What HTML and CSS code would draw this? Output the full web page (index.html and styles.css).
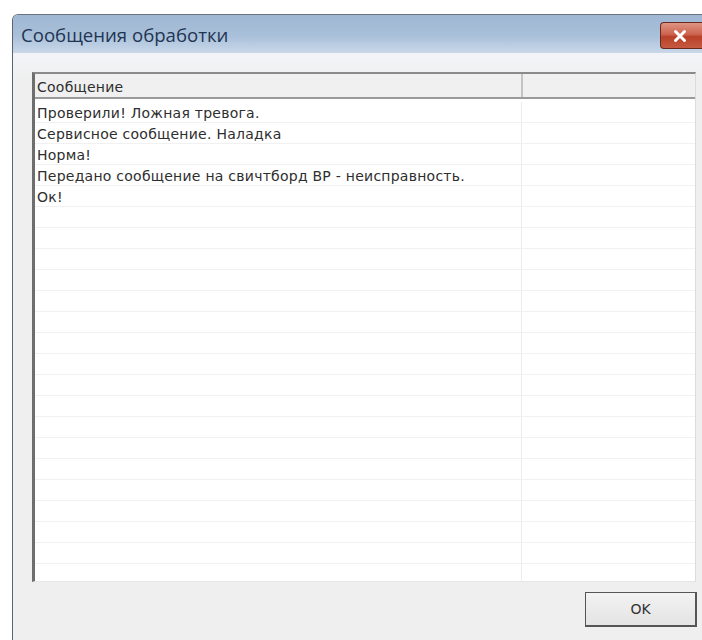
FILE: index.html
```html
<!DOCTYPE html>
<html lang="ru">
<head>
<meta charset="utf-8">
<title>Сообщения обработки</title>
<link rel="stylesheet" href="styles.css">
</head>
<body>
<div class="window">
  <div class="titlebar">
    <span class="title">Сообщения обработки</span>
    <button class="close" aria-label="Закрыть">
      <svg width="16" height="14" viewBox="0 0 16 14">
        <path d="M3.5 2.5 L12.5 11.5 M12.5 2.5 L3.5 11.5" stroke="#fff" stroke-width="3" stroke-linecap="round"/>
      </svg>
    </button>
  </div>
  <div class="client">
    <div class="list">
      <div class="header">
        <div class="hcell main">Сообщение</div>
        <div class="hcell extra"></div>
      </div>
      <div class="rows">
        <div class="row"><div class="cell main">Проверили! Ложная тревога.</div><div class="cell extra"></div></div>
        <div class="row"><div class="cell main">Сервисное сообщение. Наладка</div><div class="cell extra"></div></div>
        <div class="row"><div class="cell main">Норма!</div><div class="cell extra"></div></div>
        <div class="row"><div class="cell main">Передано сообщение на свичтборд ВР - неисправность.</div><div class="cell extra"></div></div>
        <div class="row"><div class="cell main">Ок!</div><div class="cell extra"></div></div>
        <div class="row"><div class="cell main"></div><div class="cell extra"></div></div>
        <div class="row"><div class="cell main"></div><div class="cell extra"></div></div>
        <div class="row"><div class="cell main"></div><div class="cell extra"></div></div>
        <div class="row"><div class="cell main"></div><div class="cell extra"></div></div>
        <div class="row"><div class="cell main"></div><div class="cell extra"></div></div>
        <div class="row"><div class="cell main"></div><div class="cell extra"></div></div>
        <div class="row"><div class="cell main"></div><div class="cell extra"></div></div>
        <div class="row"><div class="cell main"></div><div class="cell extra"></div></div>
        <div class="row"><div class="cell main"></div><div class="cell extra"></div></div>
        <div class="row"><div class="cell main"></div><div class="cell extra"></div></div>
        <div class="row"><div class="cell main"></div><div class="cell extra"></div></div>
        <div class="row"><div class="cell main"></div><div class="cell extra"></div></div>
        <div class="row"><div class="cell main"></div><div class="cell extra"></div></div>
        <div class="row"><div class="cell main"></div><div class="cell extra"></div></div>
        <div class="row"><div class="cell main"></div><div class="cell extra"></div></div>
        <div class="row"><div class="cell main"></div><div class="cell extra"></div></div>
        <div class="row"><div class="cell main"></div><div class="cell extra"></div></div>
        <div class="row"><div class="cell main"></div><div class="cell extra"></div></div>
      </div>
    </div>
    <div class="buttons">
      <button class="ok">OK</button>
    </div>
  </div>
</div>
</body>
</html>
```
FILE: styles.css
```css
html, body {
  margin: 0;
  padding: 0;
  background: #ffffff;
  overflow: hidden;
}

body {
  width: 702px;
  height: 640px;
  font-family: "DejaVu Sans", Verdana, sans-serif;
  font-size: 14px;
  letter-spacing: 0.25px;
  color: #2e2e2e;
}

.window {
  margin: 14px 0 0 12px;
  height: 626px;
  border-left: 1px solid #5b6470;
  border-top: 1px solid #6b7480;
  border-top-left-radius: 6px;
  background: #eef2f6;
  display: flex;
  flex-direction: column;
  overflow: hidden;
}

.titlebar {
  height: 38px;
  flex: none;
  display: flex;
  align-items: flex-start;
  justify-content: space-between;
  background: linear-gradient(to bottom, #9fb7d3 0%, #a9c0da 55%, #c9d8e9 100%);
}

.title {
  font-family: "Open Sans", "Noto Sans", sans-serif;
  font-size: 18.6px;
  letter-spacing: 0;
  color: #1f3553;
  padding: 7px 0 0 8px;
}

.close {
  margin-top: 7px;
  width: 42px;
  height: 27px;
  padding: 0 4px 0 0;
  border: 1px solid #6a2a20;
  border-right: none;
  border-radius: 4px 0 0 4px;
  background: linear-gradient(to bottom, #df9483 0%, #cd6450 45%, #b94029 55%, #c55a40 100%);
  display: flex;
  align-items: center;
  justify-content: center;
}

.client {
  flex: 1;
  display: flex;
  flex-direction: column;
  padding: 19px 6px 0 19px;
  background: linear-gradient(to bottom, #f2f4f7 0px, #efefef 30px);
}

.list {
  height: 507px;
  flex: none;
  border-left: 3px solid #6e6e6e;
  border-top: 2px solid #8a8a8a;
  border-right: 1px solid #dcdcdc;
  border-bottom: 1px solid #e6e6e6;
  background: #ffffff;
  display: flex;
  flex-direction: column;
  overflow: hidden;
}

.header {
  display: flex;
  height: 23px;
  flex: none;
  background: #f0f0f0;
  border-bottom: 2px solid #9a9a9a;
}

.hcell {
  display: flex;
  align-items: center;
  padding: 2px 0 0 2px;
}

.main {
  width: 484px;
  flex: none;
}

.extra {
  flex: 1;
}

.hcell.main {
  border-right: 2px solid #c4c4c4;
}

.rows {
  flex: 1;
  padding-top: 3px;
}

.row {
  display: flex;
  height: 21px;
  border-bottom: 1px solid #f1f1f1;
  box-sizing: border-box;
}

.cell {
  display: flex;
  align-items: center;
  padding: 1px 0 0 2px;
  white-space: nowrap;
}

.cell.main {
  border-right: 1px solid #ececec;
}

.buttons {
  display: flex;
  justify-content: flex-end;
  padding: 10px 0 0 0;
}

.ok {
  width: 112px;
  height: 35px;
  border: 1px solid #555555;
  border-right-width: 2px;
  border-bottom-width: 2px;
  background: linear-gradient(to bottom, #f2f2f2, #e4e4e4);
  font-family: "DejaVu Sans", Verdana, sans-serif;
  font-size: 14px;
  color: #333333;
  margin-right: -1px;
}
```
